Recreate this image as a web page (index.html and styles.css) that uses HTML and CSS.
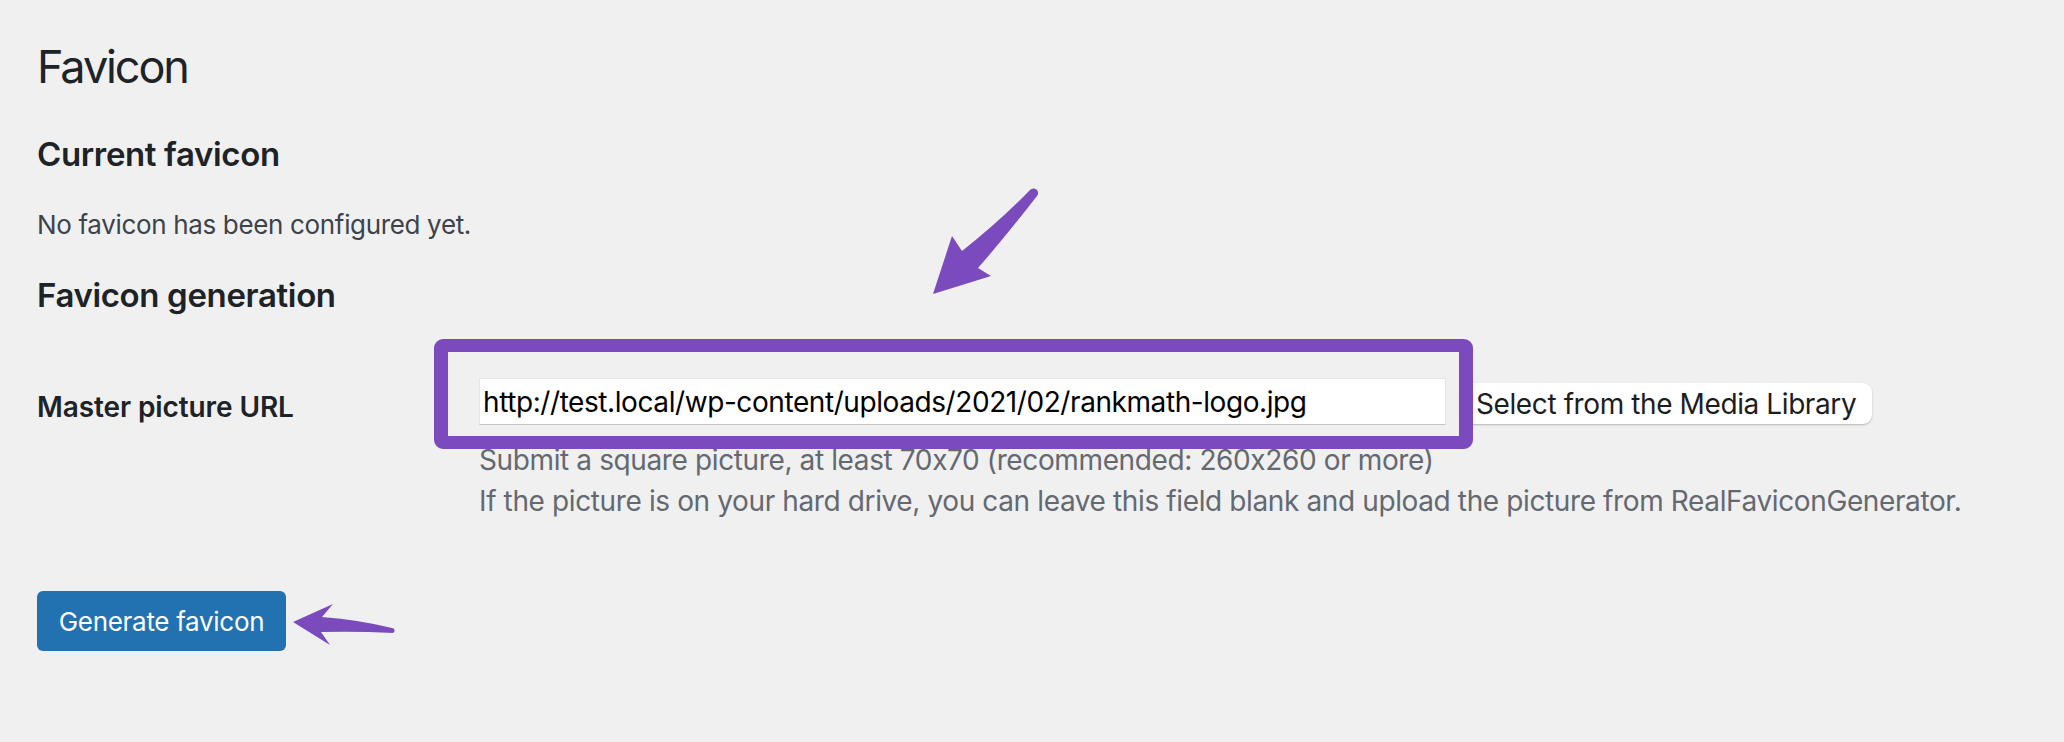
FILE: index.html
```html
<html>
    <head>
        <meta name="viewport" content="width=device-width, initial-scale=1.0">
        <title>Favicon</title>
        <link rel="stylesheet" href="styles.css">
    </head>
    <body>
        <div class="wrap">
            <h1 class="page-title">Favicon</h1>

            <h2 class="section-title first">Current favicon</h2>
            <p class="note">No favicon has been configured yet.</p>

            <h2 class="section-title">Favicon generation</h2>

            <div class="field-row">
                <label class="field-label" for="master-url">Master picture URL</label>
                <div class="field-body">
                    <div class="picker">
                        <input id="master-url" class="url-input" type="text" value="http://test.local/wp-content/uploads/2021/02/rankmath-logo.jpg">
                        <button class="media-button" type="button">Select from the Media Library</button>
                    </div>
                    <p class="description">Submit a square picture, at least 70x70 (recommended: 260x260 or more)<br>If the picture is on your hard drive, you can leave this field blank and upload the picture from RealFaviconGenerator.</p>
                </div>
            </div>

            <button class="primary-button" type="button">Generate favicon</button>

            <!-- markierung + pfeile -->
            <div class="highlight-box"></div>
            <svg class="annotations" width="2064" height="742" viewBox="0 0 2064 742">
                <path d="M933 294 L952 236 L962 251 Q1000 221 1030 190 A3.8 3.8 0 0 1 1037 196 Q1006 236 978 268 L991 276 Z" />
                <path d="M293 622 L333 604 L322 617 Q360 620 392 628 A2.6 2.6 0 0 1 393 633 Q356 631 321 632 L330 645 Z" />
            </svg>
        </div>
    </body>
</html>
```

FILE: styles.css
```css
body {
    margin: 0;
    background: #f0f0f1;
    font-family: Inter, "Liberation Sans", sans-serif;
    font-feature-settings: "calt" 0;
    color: #3c434a;
}
.wrap {
    position: relative;
    width: 2064px;
    height: 742px;
    padding-left: 37px;
    box-sizing: border-box;
    overflow: hidden;
}
.page-title {
    margin: 38px 0 0;
    font-size: 45px;
    line-height: 58px;
    font-weight: 400;
    color: #1d2327;
    letter-spacing: -2.1px;
}
.section-title {
    margin: 28px 0 0;
    font-size: 33px;
    line-height: 46px;
    font-weight: 600;
    color: #1d2327;
    letter-spacing: -0.36px;
}
.section-title.first {
    margin-top: 35px;
}
.note {
    margin: 28px 0 0;
    font-size: 26px;
    line-height: 39px;
    letter-spacing: -0.34px;
}
.field-row {
    display: flex;
    margin-top: 60px;
}
.field-label {
    width: 442px;
    padding-top: 9px;
    font-size: 28px;
    line-height: 40px;
    font-weight: 600;
    color: #1d2327;
    letter-spacing: -0.1px;
}
.field-body {
    display: flex;
    flex-direction: column;
}
.picker {
    display: flex;
    align-items: flex-start;
}
.url-input {
    width: 967px;
    height: 47px;
    box-sizing: border-box;
    padding: 0 3px;
    border: 1px solid #e4e4e4;
    border-bottom-color: #c3c4c7;
    background: #fff;
    font-family: Inter, "Liberation Sans", sans-serif;
    font-feature-settings: "calt" 0;
    font-size: 28px;
    letter-spacing: -0.42px;
    color: #000;
    outline: none;
}
.media-button {
    margin: 5px 0 0 14px;
    height: 41px;
    padding: 0 16px;
    border: none;
    border-radius: 9px;
    background: #fff;
    box-shadow: 0 1px 2px rgba(0, 0, 0, 0.25);
    font-family: Inter, "Liberation Sans", sans-serif;
    font-size: 28px;
    letter-spacing: -0.4px;
    color: #1d1d1f;
}
.description {
    margin: 15px 0 0;
    font-size: 28px;
    line-height: 41px;
    letter-spacing: -0.38px;
    color: #646970;
}
.primary-button {
    display: block;
    margin-top: 69px;
    height: 60px;
    width: 249px;
    padding: 0;
    border: none;
    border-radius: 6px;
    background: #2271b1;
    font-family: Inter, "Liberation Sans", sans-serif;
    font-size: 26px;
    letter-spacing: -0.3px;
    color: #fff;
}
.highlight-box {
    position: absolute;
    left: 434px;
    top: 339px;
    width: 1039px;
    height: 110px;
    box-sizing: border-box;
    border: 14px solid #7b4bbd;
    border-top-width: 13px;
    border-bottom-width: 13px;
    border-radius: 9px;
}
.annotations {
    position: absolute;
    left: 0;
    top: 0;
    pointer-events: none;
}
.annotations path {
    fill: #7b4bbd;
}
```
